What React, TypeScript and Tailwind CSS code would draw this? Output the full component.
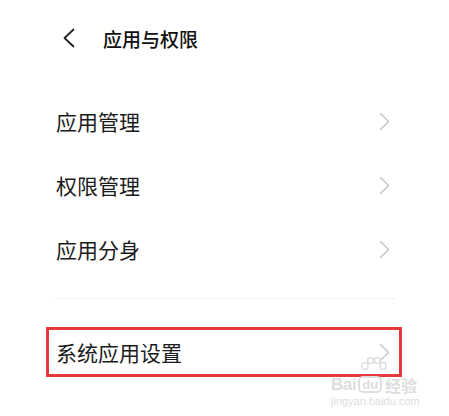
const font = { fontFamily: '"Noto Sans CJK SC", "Noto Sans", sans-serif' };
const latin = { fontFamily: '"Liberation Sans", sans-serif' };

function Chevron() {
  return (
    <svg width="11" height="19" viewBox="0 0 11 19" fill="none">
      <polyline points="1.5,1.5 9.5,9.5 1.5,17.5" stroke="#c9c9c9" strokeWidth="1.6" strokeLinecap="round" strokeLinejoin="round" />
    </svg>
  );
}

function Row({ label }: { label: string }) {
  return (
    <div className="flex h-[64px] items-center justify-between pl-[56px] pr-[59px]">
      <span className="text-[21px] leading-none text-[#1b1b1b]">{label}</span>
      <Chevron />
    </div>
  );
}

export default function App() {
  return (
    <div className="relative h-[416px] w-[449px] overflow-hidden bg-white" style={font}>
      <div className="flex h-[76px] items-center">
        <svg className="ml-[62px]" width="14" height="20" viewBox="0 0 14 20" fill="none">
          <polyline points="11.5,1.5 2.5,10 11.5,18.5" stroke="#222" strokeWidth="1.8" strokeLinecap="round" strokeLinejoin="round" />
        </svg>
        <span className="ml-[27px] text-[19px] font-medium leading-none text-[#111]">应用与权限</span>
      </div>

      <div className="pt-[13px]">
        <Row label="应用管理" />
        <Row label="权限管理" />
        <Row label="应用分身" />
      </div>

      <div className="mx-[54px] mt-[17px] border-t border-[#f1f1f1]" />

      <div className="ml-[46px] mt-[28px] flex h-[50px] w-[356px] items-center justify-between border-[3px] border-[#e63a3e] pl-[7px] pr-[9px]">
        <span className="text-[21px] leading-none text-[#1b1b1b]">系统应用设置</span>
        <Chevron />
      </div>

      <div className="pointer-events-none absolute left-[331px] top-[357px] flex flex-col items-start text-[#dedede]">
        <svg className="ml-[29px]" width="28" height="20" viewBox="0 0 28 20" fill="none" stroke="#dedede" strokeWidth="1.5">
          <ellipse cx="5" cy="9" rx="3" ry="3.5" />
          <ellipse cx="10.5" cy="3.5" rx="3" ry="3" />
          <ellipse cx="17.5" cy="3.5" rx="3" ry="3" />
          <ellipse cx="23" cy="9" rx="3" ry="3.5" />
        </svg>
        <div className="-mt-[1px] flex items-end leading-none">
          <span className="text-[17px] font-bold tracking-tight" style={latin}>Bai</span>
          <span className="ml-[2px] rounded-[5px] border-2 border-[#dedede] px-[2px] text-[13px] font-bold" style={latin}>du</span>
          <span className="ml-[3px] text-[16px] font-bold">经验</span>
        </div>
        <span className="mt-[3px] text-[11px] leading-none" style={latin}>jingyan.baidu.com</span>
      </div>
    </div>
  );
}
